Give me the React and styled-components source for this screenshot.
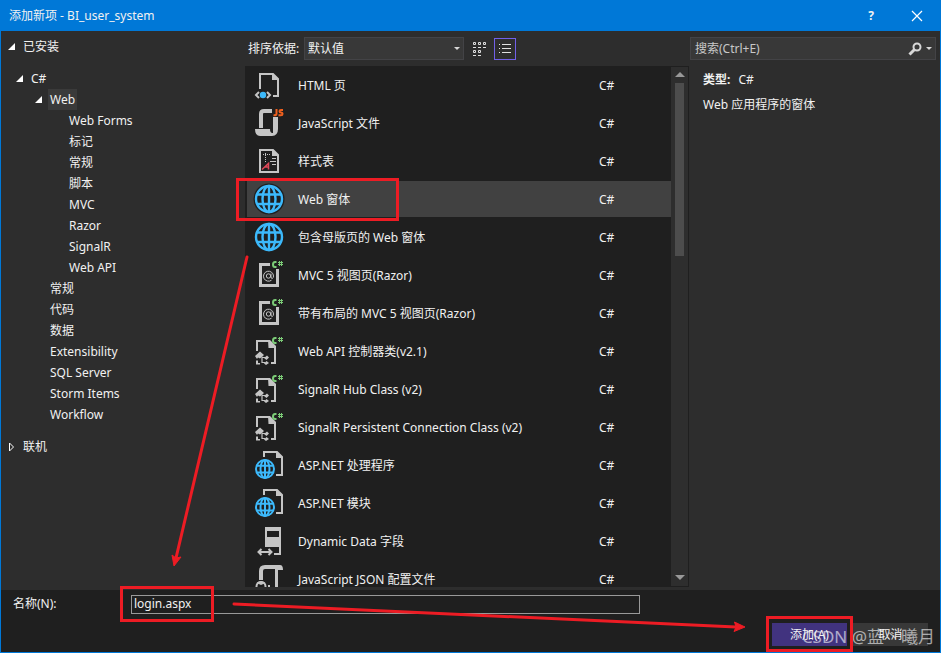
import React, { useState } from 'react';
import styled, { createGlobalStyle, css } from 'styled-components';

const GREY = '#c5c5c5';
const BLUE = '#3cb9fb';
const GREEN = '#7ccc77';

const treeItems = [
  { text: 'C#', depth: 0, open: true },
  { text: 'Web', depth: 1, open: true, selected: true },
  { text: 'Web Forms', depth: 2 },
  { text: '标记', depth: 2 },
  { text: '常规', depth: 2 },
  { text: '脚本', depth: 2 },
  { text: 'MVC', depth: 2 },
  { text: 'Razor', depth: 2 },
  { text: 'SignalR', depth: 2 },
  { text: 'Web API', depth: 2 },
  { text: '常规', depth: 1 },
  { text: '代码', depth: 1 },
  { text: '数据', depth: 1 },
  { text: 'Extensibility', depth: 1 },
  { text: 'SQL Server', depth: 1 },
  { text: 'Storm Items', depth: 1 },
  { text: 'Workflow', depth: 1 },
];

const templates = [
  { name: 'HTML 页', icon: 'html' },
  { name: 'JavaScript 文件', icon: 'js' },
  { name: '样式表', icon: 'css' },
  { name: 'Web 窗体', icon: 'globe' },
  { name: '包含母版页的 Web 窗体', icon: 'globe' },
  { name: 'MVC 5 视图页(Razor)', icon: 'razor' },
  { name: '带有布局的 MVC 5 视图页(Razor)', icon: 'razor' },
  { name: 'Web API 控制器类(v2.1)', icon: 'class' },
  { name: 'SignalR Hub Class (v2)', icon: 'class' },
  { name: 'SignalR Persistent Connection Class (v2)', icon: 'class' },
  { name: 'ASP.NET 处理程序', icon: 'aspnet' },
  { name: 'ASP.NET 模块', icon: 'aspnet' },
  { name: 'Dynamic Data 字段', icon: 'field' },
  { name: 'JavaScript JSON 配置文件', icon: 'json' },
];

const Globe = ({ cx, cy, r, width }) => (
  <g fill="none" stroke={BLUE} strokeWidth={width}>
    <circle cx={cx} cy={cy} r={r} />
    <ellipse cx={cx} cy={cy} rx={r * 0.5} ry={r} />
    <path d={`M${cx} ${cy - r}V${cy + r}M${cx - r * 0.92} ${cy - r * 0.35}H${cx + r * 0.92}M${cx - r * 0.92} ${cy + r * 0.38}H${cx + r * 0.92}`} />
  </g>
);

const CSharpTag = () => (
  <g fill="none" stroke={GREEN}>
    <path d="M23.500 3H22Q20 3 20 5.500Q20 8 22 8H23.500" strokeWidth="2" />
    <path d="M26.500 2V7M28.500 2V7M25 3.500H30M25 5.500H30" />
  </g>
);

const icons = {
  html: (
    <>
      <path d="M7 20V5H20L25 10V27H20" fill="none" stroke={GREY} strokeWidth="2" />
      <path d="M19 4V11H26Z" fill={GREY} />
      <path d="M6 23L3 26L6 29M14 23L17 26L14 29" fill="none" stroke={GREY} strokeWidth="2" />
      <circle cx="10" cy="26" r="3.200" fill={BLUE} />
    </>
  ),
  js: (
    <>
      <path d="M8 21V7Q8 4 11 4H19" fill="none" stroke={GREY} strokeWidth="4" />
      <path d="M2 22H17Q17 26.500 20 26V10H25V22Q25 28.500 19 29H7Q2 29 2 22Z" fill={GREY} />
      <path d="M23.500 2V7Q23.500 8.500 20.500 8.200M30 3H28Q26.500 3 26.500 4.200Q26.500 5.500 28 5.500Q29.500 5.500 29.500 7Q29.500 8.200 28 8.200H25.500" fill="none" stroke="#f0601e" strokeWidth="2" />
    </>
  ),
  css: (
    <>
      <path d="M7 5H20L25 10V27H7Z" fill="none" stroke={GREY} strokeWidth="2" />
      <path d="M19 4V11H26Z" fill={GREY} />
      <path d="M10 9.500H17M12.500 8V18" fill="none" stroke={GREY} strokeDasharray="1 1" />
      <path d="M19 13.500H23M17 16.500H23M19 19.500H23" stroke={GREY} />
      <path d="M9 24.500L15.500 18.500V24.500M11.500 22H16" fill="none" stroke="#e04858" strokeWidth="1.500" />
    </>
  ),
  globe: (
    <>
      <circle cx="16" cy="16" r="15.500" fill="#1f1f1f" />
      <Globe cx={16} cy={16} r={13} width={2.4} />
    </>
  ),
  razor: (
    <>
      <path d="M17 5.500H7.500V26.500H24.500V10" fill="none" stroke={GREY} strokeWidth="3" />
      <g fill="none" stroke={GREY} strokeWidth="1">
        <circle cx="15.500" cy="17" r="2.200" />
        <path d="M18 14.500V18Q18 19.500 19.300 19.500Q20.500 19 20.500 17A5 5 0 1 0 18.500 21.200" />
      </g>
      <CSharpTag />
    </>
  ),
  class: (
    <>
      <path d="M4 16V6H16M22 12V28H18" fill="none" stroke={GREY} strokeWidth="2" />
      <path d="M15 5H17L23 11V13H15.500Z" fill={GREY} />
      <path d="M2 21L7 16.500L11 20L7 23.500L5 22.500L4 24Z" fill={GREY} />
      <path d="M11 23L14 20.500L16 22.500L13.500 25ZM11 28.500L13.500 26L16 28L13 30ZM3 25.500H5V28H7V29.500H3Z" fill={GREY} />
      <path d="M9 21.500V27.500H12M9 22.500H12" fill="none" stroke={GREY} strokeWidth="1.200" />
      <CSharpTag />
    </>
  ),
  aspnet: (
    <>
      <path d="M11 8V3H24L29 8V26H23" fill="none" stroke={GREY} strokeWidth="2" />
      <path d="M23 2V9H30Z" fill={GREY} />
      <Globe cx={12} cy={20} r={9} width={2} />
    </>
  ),
  field: (
    <>
      <path d="M12 2H28V30H21V28H26V22H12ZM14 6V12H26V6Z" fill={GREY} fillRule="evenodd" />
      <path d="M8.500 24L5.500 27L8.500 30M15.500 24L18.500 27L15.500 30M6 27H18" fill="none" stroke={GREY} strokeWidth="2" />
    </>
  ),
  json: (
    <>
      <path d="M8 17V8Q8 4 12 4H24" fill="none" stroke={GREY} strokeWidth="4" />
      <path d="M22 2H27Q30 2 30 7H25V30H22Z" fill={GREY} />
      <circle cx="8" cy="23.500" r="4.500" fill="none" stroke={GREY} strokeWidth="2" />
      <path d="M3.500 20Q8 16 12.500 20L8 22Z" fill={GREY} />
      <path d="M15 23H17" stroke={GREY} strokeWidth="2" />
    </>
  ),
};

const App = () => {
  const [selected, setSelected] = useState(3);
  const [fileName, setFileName] = useState('login.aspx');
  const [keyword, setKeyword] = useState('');

  return (
    <>
      <GlobalStyle />
      <Dialog>
        <TitleBar>
          <Title>添加新项 - BI_user_system</Title>
          <TitleButton aria-label="帮助">?</TitleButton>
          <TitleButton aria-label="关闭">
            <svg width="12" height="12" viewBox="0 0 12 12" stroke="#fff" strokeWidth="1.200">
              <path d="M1 1L11 11M11 1L1 11" />
            </svg>
          </TitleButton>
        </TitleBar>

        <Content>
          <Sidebar>
            <TreeRow><Expander open /><TreeText>已安装</TreeText></TreeRow>
            <Tree>
              {treeItems.map((item, index) => (
                <TreeRow key={index} $depth={item.depth + 1}>
                  <Expander open={item.open} hidden={!item.open} />
                  <TreeText $selected={item.selected}>{item.text}</TreeText>
                </TreeRow>
              ))}
            </Tree>
            <TreeRow><Expander /><TreeText>联机</TreeText></TreeRow>
          </Sidebar>

          <Center>
            <Toolbar>
              <label htmlFor="sort">排序依据:</label>
              <SelectBox>
                <Select id="sort">
                  <option>默认值</option>
                </Select>
                <Caret />
              </SelectBox>
              <ViewButton aria-label="中等图标">
                <svg width="14" height="14" viewBox="0 0 14 14" fill="none" stroke="#e0e0e0">
                  <path d="M0.500 0.500h2v2h-2zM5.500 0.500h2v2h-2zM10.500 0.500h2v2h-2zM0.500 8.500h2v2h-2zM5.500 8.500h2v2h-2zM0 5.500h3M5 5.500h3M10 5.500h3M0 13.500h3M5 13.500h3" />
                </svg>
              </ViewButton>
              <ViewButton aria-label="小图标" $active>
                <svg width="14" height="14" viewBox="0 0 14 14" stroke="#e0e0e0">
                  <path d="M1 2.500h1M4 2.500h9M1 6.500h1M4 6.500h9M1 10.500h1M4 10.500h9" />
                </svg>
              </ViewButton>
            </Toolbar>
            <ListBox>
              <List>
                {templates.map((item, index) => (
                  <Row key={item.name} $selected={index === selected} onClick={() => setSelected(index)}>
                    <svg width="32" height="32" viewBox="0 0 32 32">{icons[item.icon]}</svg>
                    <RowName>{item.name}</RowName>
                    <RowType>C#</RowType>
                  </Row>
                ))}
              </List>
              <ScrollBar>
                <ScrollArrow $up />
                <ScrollThumb />
                <ScrollArrow />
              </ScrollBar>
            </ListBox>
          </Center>

          <Details>
            <SearchBox>
              <SearchInput
                aria-label="搜索"
                placeholder="搜索(Ctrl+E)"
                value={keyword}
                onChange={(e) => setKeyword(e.target.value)}
              />
              <svg width="14" height="14" viewBox="0 0 14 14" fill="none" stroke="#d8d8d8">
                <circle cx="9" cy="5" r="3.500" strokeWidth="2" />
                <path d="M6.500 7.500L1.500 12.500" strokeWidth="3" />
              </svg>
              <Caret />
            </SearchBox>
            <Info>
              <p><b>类型:</b>C#</p>
              <p>Web 应用程序的窗体</p>
            </Info>
          </Details>
        </Content>

        <Footer>
          <NameRow>
            <label htmlFor="name">名称(N):</label>
            <NameInput id="name" value={fileName} onChange={(e) => setFileName(e.target.value)} />
          </NameRow>
          <Actions>
            <Button $primary>添加(A)</Button>
            <Button>取消</Button>
          </Actions>
        </Footer>

        <Watermark>CSDN @蓝丶曦月</Watermark>
        <Marks width="941" height="653" viewBox="0 0 941 653" fill="none" stroke="#ed1c24" strokeWidth="3">
          <path d="M237.500 179.500H397.500V219.500H237.500ZM121.500 587.500H212.500V620.500H121.500ZM767.500 617.500H851.500V650.500H767.500Z" />
          <path d="M247 257L176 558M234 604L736 627" strokeLinecap="round" />
          <path d="M174 566L172 555L176 558L181 557ZM745 627L734 631.500L736 627L734.500 622Z" fill="#ed1c24" strokeWidth="1" />
        </Marks>
      </Dialog>
    </>
  );
};

const Expander = ({ open, hidden }) => (
  <ExpanderIcon $hidden={hidden} width="7" height={open ? 8 : 10} viewBox={open ? '0 0 7 8' : '0 0 7 10'}>
    {open
      ? <path d="M7 0V7H0Z" fill="#fff" />
      : <path d="M1.500 1V9L5.500 5Z" fill="none" stroke="#fff" />}
  </ExpanderIcon>
);

export default App;

const GlobalStyle = createGlobalStyle`
  * {
    box-sizing: border-box;
  }

  body {
    margin: 0;
    background-color: #2d2d2d;
  }

  body, button, input, select {
    font-family: "Noto Sans", "Noto Sans CJK SC", sans-serif;
    font-size: 12px;
    line-height: 20px;
    color: #f1f1f1;
  }
`;

const Dialog = styled.div`
  position: relative;
  display: flex;
  flex-direction: column;
  height: 100vh;
  border: 1px solid #0078d7;
  overflow: hidden;
`;

const TitleBar = styled.header`
  display: flex;
  align-items: center;
  height: 30px;
  padding-left: 8px;
  background-color: #0078d7;
`;

const Title = styled.h1`
  flex: 1;
  margin: 0;
  font-size: 12px;
  font-weight: normal;
`;

const TitleButton = styled.button`
  display: flex;
  align-items: center;
  justify-content: center;
  width: 46px;
  height: 30px;
  padding: 0;
  border: none;
  background: none;
  font-weight: bold;
`;

const Content = styled.main`
  flex: 1;
  display: grid;
  grid-template-columns: 244px minmax(0, 1fr) 251px;
  min-height: 0;
`;

const Sidebar = styled.nav`
  display: flex;
  flex-direction: column;
  gap: 11px;
  padding-top: 5px;
`;

const Tree = styled.div`
  display: flex;
  flex-direction: column;
`;

const TreeRow = styled.div`
  display: flex;
  align-items: center;
  height: 21px;
  padding-left: ${({ $depth }) => ($depth ? $depth * 19 - 4 : 7)}px;
`;

const ExpanderIcon = styled.svg`
  flex: none;
  margin-right: 6px;
  visibility: ${({ $hidden }) => ($hidden ? 'hidden' : 'visible')};
`;

const TreeText = styled.span`
  padding: 0 2px;
  line-height: 21px;
  background-color: ${({ $selected }) => ($selected ? '#3a3a3a' : 'transparent')};
`;

const Center = styled.section`
  display: flex;
  flex-direction: column;
  min-height: 0;
  padding-bottom: 3px;
`;

const Toolbar = styled.div`
  display: flex;
  align-items: center;
  flex: none;
  height: 35px;
  padding-left: 3px;

  label {
    width: 56px;
    white-space: nowrap;
  }
`;

const SelectBox = styled.div`
  display: flex;
  align-items: center;
  width: 160px;
  height: 23px;
  margin-right: 5px;
  padding-right: 3px;
  border: 1px solid #434346;
  background-color: #383838;
`;

const Select = styled.select`
  flex: 1;
  min-width: 0;
  padding: 0 3px;
  border: none;
  outline: none;
  appearance: none;
  background: none;
`;

const Caret = styled.i`
  flex: none;
  border: 3px solid transparent;
  border-top-color: #d8d8d8;
  border-bottom: none;
`;

const ViewButton = styled.button`
  display: flex;
  align-items: center;
  justify-content: center;
  width: 22px;
  height: 22px;
  margin-right: 3px;
  padding: 0;
  border: 1px solid ${({ $active }) => ($active ? '#7160e8' : 'transparent')};
  background: none;
`;

const ListBox = styled.div`
  flex: 1;
  display: flex;
  min-height: 0;
  background-color: #1f1f1f;
`;

const List = styled.ul`
  flex: 1;
  display: flex;
  flex-direction: column;
  gap: 2px;
  margin: 0;
  padding: 1px 0 0 2px;
  list-style: none;
  overflow: hidden;
`;

const Row = styled.li`
  flex: none;
  display: flex;
  align-items: center;
  height: 36px;
  padding-left: 6px;
  background-color: ${({ $selected }) => ($selected ? '#414141' : 'transparent')};
`;

const RowName = styled.span`
  flex: 1;
  padding: 2px 0 0 13px;
  white-space: nowrap;
`;

const RowType = styled.span`
  width: 72px;
  padding-top: 2px;
`;

const ScrollBar = styled.div`
  display: flex;
  flex-direction: column;
  align-items: center;
  width: 17px;
  margin: 1px 1px 1px 0;
  padding: 5px 0 6px;
  background-color: #2e2e2e;
`;

const ScrollArrow = styled.span`
  border: 5px solid transparent;
  ${({ $up }) => ($up
    ? css`
      border-top: none;
      border-bottom-color: #999;
    `
    : css`
      margin-top: auto;
      border-bottom: none;
      border-top-color: #999;
    `)}
`;

const ScrollThumb = styled.span`
  width: 9px;
  height: 34%;
  margin-top: 6px;
  background-color: #4d4d4d;
`;

const Details = styled.aside`
  padding: 6px 4px 0 1px;
`;

const SearchBox = styled.div`
  display: flex;
  align-items: center;
  gap: 4px;
  height: 23px;
  padding-right: 3px;
  border: 1px solid #434346;
  background-color: #383838;
`;

const SearchInput = styled.input`
  flex: 1;
  min-width: 0;
  padding: 0 4px;
  border: none;
  outline: none;
  background: none;

  &::placeholder {
    color: #c8c8c8;
  }
`;

const Info = styled.div`
  padding: 7px 13px;

  p {
    margin: 0;
    line-height: 25px;
  }

  b {
    margin-right: 8px;
  }
`;

const Footer = styled.footer`
  display: flex;
  flex-direction: column;
  gap: 9px;
  height: 62px;
  padding: 4px 12px 0;
  background-color: #1f1f1f;
`;

const NameRow = styled.div`
  display: flex;
  align-items: center;

  label {
    width: 118px;
  }
`;

const NameInput = styled.input`
  flex: 0 1 509px;
  height: 19px;
  padding: 0 2px;
  border: 1px solid #999;
  outline: none;
  background: none;
`;

const Actions = styled.div`
  display: flex;
  justify-content: flex-end;
  gap: 6px;
`;

const Button = styled.button`
  width: 75px;
  height: 23px;
  padding: 0;
  border: none;
  background-color: ${({ $primary }) => ($primary ? '#41337f' : '#383838')};
`;

const Watermark = styled.span`
  position: absolute;
  right: 5px;
  bottom: 3px;
  font-size: 17px;
  line-height: 24px;
  color: rgba(255, 255, 255, 0.6);
  pointer-events: none;
`;

const Marks = styled.svg`
  position: absolute;
  top: -1px;
  left: -1px;
  pointer-events: none;
`;
